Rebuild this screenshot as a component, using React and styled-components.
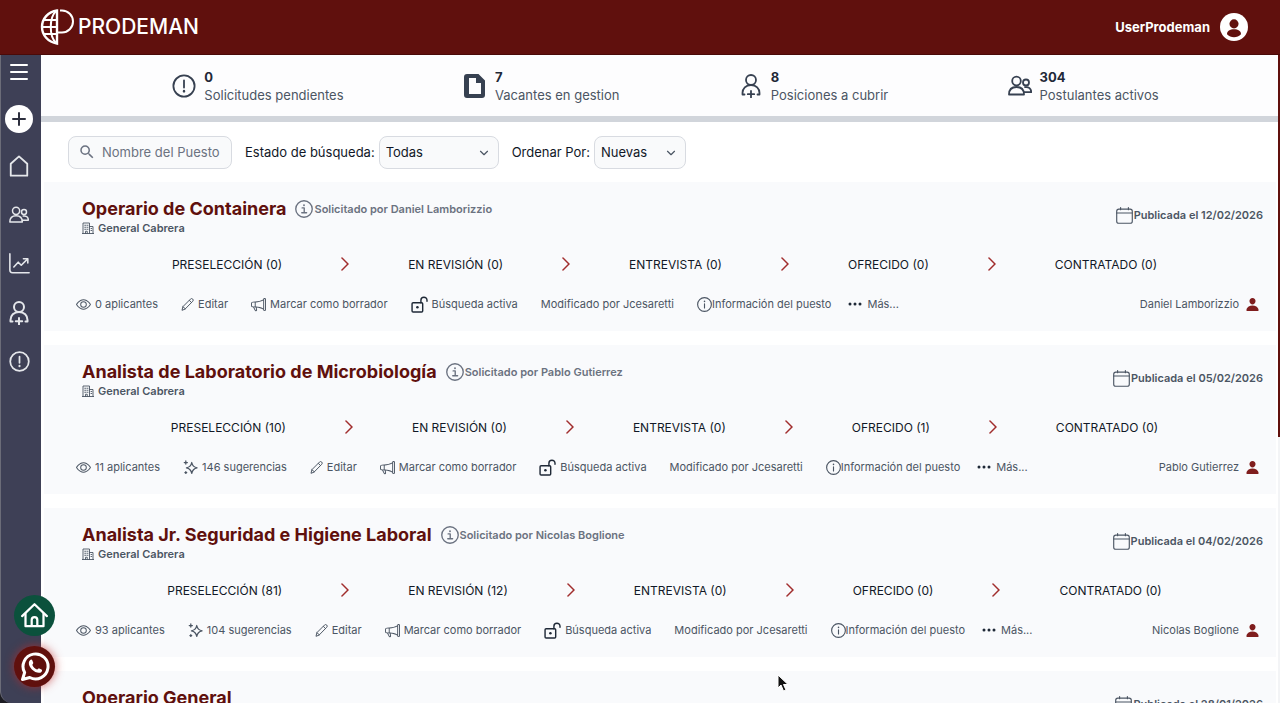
import React, { useState } from "react";
import styled, { createGlobalStyle } from "styled-components";
import { BsChevronRight, BsThreeDots, BsEye, BsMegaphone } from "react-icons/bs";
import { IoPerson } from "react-icons/io5";
import { FiChevronDown } from "react-icons/fi";
import { MdSearch } from "react-icons/md";

const STATS = [
  { icon: "alert", total: 0, label: "Solicitudes pendientes" },
  { icon: "file", total: 7, label: "Vacantes en gestion" },
  { icon: "personAdd", total: 8, label: "Posiciones a cubrir" },
  { icon: "users", total: 304, label: "Postulantes activos" },
];

const STAGES = ["PRESELECCIÓN", "EN REVISIÓN", "ENTREVISTA", "OFRECIDO", "CONTRATADO"];

const JOBS = [
  {
    id: 1,
    title: "Operario de Containera",
    owner: "Daniel Lamborizzio",
    date: "12/02/2026",
    totals: [0, 0, 0, 0, 0],
    applicants: 0,
  },
  {
    id: 2,
    title: "Analista de Laboratorio de Microbiología",
    owner: "Pablo Gutierrez",
    date: "05/02/2026",
    totals: [10, 0, 0, 1, 0],
    applicants: 11,
    suggestions: 146,
  },
  {
    id: 3,
    title: "Analista Jr. Seguridad e Higiene Laboral",
    owner: "Nicolas Boglione",
    date: "04/02/2026",
    totals: [81, 12, 0, 0, 0],
    applicants: 93,
    suggestions: 104,
  },
  {
    id: 4,
    title: "Operario General",
    date: "28/01/2026",
    totals: [0, 0, 0, 0, 0],
    applicants: 0,
  },
];

const ICONS = {
  alert: (
    <>
      <circle cx="12" cy="12" r="10.6" />
      <path d="M12 6.5v7" />
      <path d="M12 17v.4" strokeWidth="2.4" />
    </>
  ),
  file: (
    <path
      d="M4 0h11.500L22 6.500V21a3 3 0 0 1-3 3H4a3 3 0 0 1-3-3V3a3 3 0 0 1 3-3ZM6 4V20h12V9H13V4Z"
      fill="currentColor"
      fillRule="evenodd"
      stroke="none"
    />
  ),
  personAdd: (
    <>
      <circle cx="12" cy="6" r="5" />
      <path d="M5.500 20.500H3.500v-1.500c0-4.500 3.300-8 8.500-8s8.500 3.500 8.500 8v1.500H18.500" />
      <path d="M12 17v6.500M8.800 20.200h6.400" />
    </>
  ),
  users: (
    <>
      <circle cx="8.500" cy="7" r="4.300" />
      <path d="M1 20.500c0-4.800 3-7.500 7.500-7.500s7.500 2.700 7.500 7.500Z" />
      <circle cx="18" cy="8.500" r="3" />
      <path d="M17 13.200c3.800-.6 6.200 1.400 6.200 5H16" />
    </>
  ),
  home: <path d="M3 22.500V9.500L12 1.500l9 8v13Z" />,
  chart: (
    <>
      <path d="M1 1v18.500a3 3 0 0 0 3 3h19" />
      <path d="M5.500 16l5-5.500 3.500 3.500 7-7" />
      <path d="M16.500 6.500h5v5" />
    </>
  ),
  house: (
    <>
      <path d="M1 12.500 12 2l11 10.500" />
      <path d="M4 10.500V21.500h16V10.500" />
      <path d="M9.500 21v-5a2.500 2.500 0 0 1 5 0v5" />
    </>
  ),
  whatsapp: (
    <>
      <path d="M2 22l1.700-5.600A10 10 0 1 1 7.800 20.400Z" />
      <path
        d="M8 6.500c.8-.7 1.500-.5 1.900.3l.7 1.700c.2.500-.8 1.300-.7 1.800.7 1.600 2 2.900 3.700 3.600.5.200 1.200-1 1.800-.8l1.800.9c.7.400.5 1.200.1 1.700-2.600 3.200-11-2.300-10.200-7.500.1-.7.400-1.300.9-1.700Z"
        fill="currentColor"
        stroke="none"
      />
    </>
  ),
  building: (
    <>
      <path d="M2 23V2h13v21M15 9h7v14M0 23h24" />
      <path d="M5.500 6.500h2M10 6.500h2M5.500 10.500h2M10 10.500h2M5.500 14.500h2M10 14.500h2M18 13h1.500M18 17h1.500M7 23v-4.500h3.500V23" />
    </>
  ),
  infoSerif: (
    <>
      <circle cx="12" cy="12" r="11" />
      <path d="M9.500 10.500H12.300V17M9 17h6.500" />
      <path d="M12 6.800v.3" strokeWidth="2.400" />
    </>
  ),
  info: (
    <>
      <circle cx="12" cy="12" r="11" />
      <path d="M12 11v6.500" />
      <path d="M12 6.800v.3" strokeWidth="2.400" />
    </>
  ),
  calendar: (
    <>
      <rect x="1" y="3" width="22" height="20" rx="3" />
      <path d="M1 8.500h22M6.500 .8v3M17.500 .8v3" />
    </>
  ),
  pencil: <path d="M2 22l1.500-6L17.500 2a2.600 2.600 0 0 1 4.200 4L8 20Zm1.500-6L8 20M15.500 4.500l4 4" />,
  sparkles: (
    <>
      <path d="M14 4c1 5.500 3 7.500 8.500 8.500C17 13.500 15 15.500 14 21.500c-1-6-3-8-8.500-9C11 11.500 13 9.500 14 4Z" />
      <path d="M4.500 1.500v5M2 4h5" />
      <path d="M4.500 18.500v3M3 20h3" />
    </>
  ),
  unlock: (
    <>
      <rect x="1.500" y="9.500" width="15" height="13" rx="1.500" />
      <path d="M14 9.500V6a4.300 4.300 0 0 1 8.600 0v1.500" />
      <path d="M9 16h.1" strokeWidth="3.500" />
    </>
  ),
  avatar: (
    <>
      <circle cx="12" cy="12" r="12" fill="#fff" stroke="none" />
      <circle cx="12" cy="9.300" r="3.900" fill="#60100d" stroke="none" />
      <path d="M6 18.300c0-3 2.500-4.300 6-4.300s6 1.300 6 4.300c-3 3.300-9 3.300-12 0Z" fill="#60100d" stroke="none" />
    </>
  ),
};

function Icon({ name, size = 24, weight = 1.8 }) {
  return (
    <Drawing
      width={size}
      height={size}
      viewBox="0 0 24 24"
      fill="none"
      stroke="currentColor"
      strokeWidth={weight}
      strokeLinecap="round"
      strokeLinejoin="round"
      aria-hidden="true"
    >
      {ICONS[name]}
    </Drawing>
  );
}

function Header() {
  return (
    <TopBar>
      <Brand href="#inicio">
        <svg width="34" height="36" viewBox="0 0 34 36" fill="none" stroke="#fff" strokeWidth="2.4">
          <path d="M17 1.500v33C8 33 2 26 2 18S8 2.500 17 1.500Z" />
          <path d="M16 2C9 9 9 27 16 34M2 18H17M4 11h13M4 25h13" strokeWidth="2" />
          <path d="M20 1.500h2a11 11 0 0 1 0 22h-5" strokeWidth="2" />
        </svg>
        PRODEMAN
      </Brand>
      <UserButton type="button">
        UserProdeman
        <Icon name="avatar" size={28} />
      </UserButton>
    </TopBar>
  );
}

function SideMenu() {
  return (
    <Side>
      <MenuButton type="button" aria-label="Menú">
        <svg width="18" height="16" viewBox="0 0 18 16" stroke="#fff" strokeWidth="2" strokeLinecap="round">
          <path d="M1 1h16M1 8h16M1 15h16" />
        </svg>
      </MenuButton>
      <AddButton type="button" aria-label="Nueva búsqueda">
        <svg width="14" height="14" viewBox="0 0 14 14" stroke="#2d2f3e" strokeWidth="2" strokeLinecap="round">
          <path d="M7 1v12M1 7h12" />
        </svg>
      </AddButton>
      <SideLink href="#inicio" aria-label="Inicio">
        <Icon name="home" size={22} weight={2} />
      </SideLink>
      <SideLink href="#postulantes" aria-label="Postulantes">
        <Icon name="users" size={20} />
      </SideLink>
      <SideLink href="#reportes" aria-label="Reportes">
        <Icon name="chart" size={21} />
      </SideLink>
      <SideLink href="#posiciones" aria-label="Posiciones">
        <Icon name="personAdd" size={24} weight={2} />
      </SideLink>
      <SideLink href="#solicitudes" aria-label="Solicitudes">
        <Icon name="alert" size={21} weight={2} />
      </SideLink>
    </Side>
  );
}

function JobCard({ job }) {
  return (
    <Card>
      <CardTop>
        <div>
          <TitleRow>
            <Title>{job.title}</Title>
            {job.owner && (
              <Requested>
                <Icon name="infoSerif" size={18} />
                Solicitado por {job.owner}
              </Requested>
            )}
          </TitleRow>
          <Place>
            <Icon name="building" size={12} />
            General Cabrera
          </Place>
        </div>
        <Published>
          <Icon name="calendar" size={17} weight={1.6} />
          Publicada el {job.date}
        </Published>
      </CardTop>
      <Stages>
        {STAGES.map((stage, i) => (
          <React.Fragment key={stage}>
            {i > 0 && <BsChevronRight size={16} color="#991b1b" strokeWidth="0.5" />}
            <Stage type="button">
              {stage} ({job.totals[i]})
            </Stage>
          </React.Fragment>
        ))}
      </Stages>
      <Actions>
        <Action type="button">
          <BsEye size={15} />
          {job.applicants} aplicantes
        </Action>
        {job.suggestions && (
          <Action type="button">
            <Icon name="sparkles" size={15} weight={2} />
            {job.suggestions} sugerencias
          </Action>
        )}
        <Action type="button">
          <Icon name="pencil" size={13} />
          Editar
        </Action>
        <Action type="button">
          <BsMegaphone size={15} />
          Marcar como borrador
        </Action>
        <Action type="button">
          <Dark>
            <Icon name="unlock" size={17} weight={2} />
          </Dark>
          Búsqueda activa
        </Action>
        <span>Modificado por Jcesaretti</span>
        <Action type="button" $tight>
          <Icon name="info" size={15} />
          Información del puesto
        </Action>
        <More type="button">
          <Dark>
            <BsThreeDots size={16} />
          </Dark>
          Más...
        </More>
        <Owner>
          {job.owner}
          <IoPerson size={15} color="#7f1d1d" />
        </Owner>
      </Actions>
    </Card>
  );
}

export default function App() {
  const [search, setSearch] = useState("");
  const [status, setStatus] = useState("Todas");
  const [order, setOrder] = useState("Nuevas");

  return (
    <Page>
      <GlobalStyle />
      <Header />
      <Body>
        <SideMenu />
        <Main>
          <StatsBar>
            {STATS.map((stat) => (
              <Stat key={stat.label}>
                <Icon name={stat.icon} size={24} />
                <div>
                  <strong>{stat.total}</strong>
                  <p>{stat.label}</p>
                </div>
              </Stat>
            ))}
          </StatsBar>
          <Filters>
            <SearchBox>
              <MdSearch size={18} />
              <input
                type="text"
                aria-label="Nombre del Puesto"
                placeholder="Nombre del Puesto"
                value={search}
                onChange={(e) => setSearch(e.target.value)}
              />
            </SearchBox>
            <label htmlFor="status">Estado de búsqueda:</label>
            <SelectBox $width={120}>
              <select id="status" value={status} onChange={(e) => setStatus(e.target.value)}>
                <option>Todas</option>
                <option>Activas</option>
              </select>
              <FiChevronDown size={14} />
            </SelectBox>
            <label htmlFor="order">Ordenar Por:</label>
            <SelectBox $width={92}>
              <select id="order" value={order} onChange={(e) => setOrder(e.target.value)}>
                <option>Nuevas</option>
                <option>Antiguas</option>
              </select>
              <FiChevronDown size={14} />
            </SelectBox>
          </Filters>
          <List>
            {JOBS.map((job) => (
              <JobCard key={job.id} job={job} />
            ))}
          </List>
        </Main>
        <ScrollTrack>
          <ScrollThumb />
        </ScrollTrack>
      </Body>
      <Floating>
        <RoundLink href="#inicio" aria-label="Ir al inicio">
          <Icon name="house" size={27} weight={2} />
        </RoundLink>
        <RoundLink href="#whatsapp" aria-label="WhatsApp" $red>
          <Icon name="whatsapp" size={30} weight={2.4} />
        </RoundLink>
      </Floating>
      <Pointer width="12" height="18" viewBox="0 0 12 18">
        <path d="M1 1v13l3-3 2.500 6 2.500-1-2.500-5.500H11Z" fill="#111" stroke="#fff" />
      </Pointer>
    </Page>
  );
}

const GlobalStyle = createGlobalStyle`
  * {
    box-sizing: border-box;
  }

  body {
    margin: 0;
    overflow: hidden;
    background: #ffffff;
    font-family: "Inter", sans-serif;
    color: #111827;
  }

  button,
  input,
  select {
    font: inherit;
    color: inherit;
  }

  button {
    padding: 0;
    border: none;
    background: none;
    cursor: pointer;
  }

  p {
    margin: 0;
  }
`;

const Drawing = styled.svg`
  flex-shrink: 0;
`;

const Page = styled.div`
  display: flex;
  flex-direction: column;
  height: 100vh;
  overflow: hidden;
`;

const TopBar = styled.header`
  display: flex;
  align-items: center;
  justify-content: space-between;
  flex-shrink: 0;
  height: 55px;
  padding: 0 32px 0 40px;
  background: #60100d;
  border-bottom: 1px solid #4a0a08;
  color: #ffffff;
`;

const Brand = styled.a`
  display: flex;
  align-items: center;
  gap: 4px;
  font-size: 21px;
  line-height: 24px;
  font-weight: 500;
  color: #ffffff;
  text-decoration: none;
`;

const UserButton = styled.button`
  display: flex;
  align-items: center;
  gap: 10px;
  font-size: 13px;
  font-weight: 700;
`;

const Body = styled.div`
  display: flex;
  flex: 1;
  min-height: 0;
  background: linear-gradient(to right, #1c1c22 20px, #ffffff 20px);
`;

const Side = styled.nav`
  display: flex;
  flex-direction: column;
  align-items: center;
  flex-shrink: 0;
  width: 41px;
  padding: 9px 4px 0 0;
  background: #3e4056;
  border-left: 1px solid #6b6c78;
  border-bottom-left-radius: 12px;
  color: #e5e7eb;
`;

const MenuButton = styled.button`
  display: flex;
  height: 16px;
`;

const AddButton = styled.button`
  display: flex;
  align-items: center;
  justify-content: center;
  width: 28px;
  height: 28px;
  margin: 25px 0 8px;
  border-radius: 50%;
  background: #ffffff;
`;

const SideLink = styled.a`
  display: flex;
  align-items: center;
  height: 49px;
  color: inherit;
`;

const Main = styled.main`
  display: flex;
  flex-direction: column;
  flex: 1;
  min-width: 0;
  overflow: hidden;
  background: #ffffff;
`;

const StatsBar = styled.section`
  display: flex;
  align-items: center;
  justify-content: space-evenly;
  flex-shrink: 0;
  height: 67px;
  padding-left: 12px;
  background: #fdfdfe;
  border-bottom: 6px solid #d1d5db;
  color: #374151;
`;

const Stat = styled.div`
  display: flex;
  align-items: center;
  gap: 8px;
  font-size: 13px;
  line-height: 18px;

  strong {
    display: block;
    font-weight: 700;
    color: #1f2937;
  }

  p {
    color: #4b5563;
  }
`;

const Filters = styled.form`
  display: flex;
  align-items: center;
  flex-shrink: 0;
  height: 60px;
  padding-left: 27px;
  font-size: 13px;

  label {
    margin: 0 4px 0 13px;
  }
`;

const SearchBox = styled.div`
  display: flex;
  align-items: center;
  gap: 6px;
  width: 164px;
  height: 33px;
  padding: 0 9px;
  border: 1px solid #d8dbe1;
  border-radius: 8px;
  background: #f9fafb;
  color: #6b7280;

  svg {
    flex-shrink: 0;
  }

  input {
    width: 100%;
    padding: 0;
    border: none;
    outline: none;
    background: none;
  }

  input::placeholder {
    color: #6b7280;
  }
`;

const SelectBox = styled.div`
  position: relative;
  width: ${(props) => props.$width}px;

  select {
    width: 100%;
    height: 33px;
    padding: 0 6px;
    appearance: none;
    border: 1px solid #d8dbe1;
    border-radius: 8px;
    background: #f9fafb;
  }

  svg {
    position: absolute;
    top: 10px;
    right: 8px;
    color: #4b5563;
    pointer-events: none;
  }
`;

const List = styled.section`
  display: flex;
  flex-direction: column;
  gap: 14px;
  padding: 0 2px 0 3px;
`;

const Card = styled.article`
  flex-shrink: 0;
  padding: 14px 13px 15px 32px;
  background: #f9fafc;
`;

const CardTop = styled.div`
  display: flex;
  justify-content: space-between;
  align-items: center;
  padding-left: 6px;
`;

const TitleRow = styled.div`
  display: flex;
  align-items: center;
  gap: 9px;
`;

const Title = styled.h2`
  margin: 0;
  font-size: 18px;
  line-height: 26px;
  font-weight: 700;
  color: #60100d;
`;

const Requested = styled.span`
  display: flex;
  align-items: center;
  gap: 1px;
  font-size: 11px;
  font-weight: 600;
  color: #6b7280;
`;

const Place = styled.p`
  display: flex;
  align-items: center;
  gap: 4px;
  font-size: 11px;
  line-height: 12px;
  font-weight: 600;
  color: #4b5563;
`;

const Published = styled.span`
  display: flex;
  align-items: center;
  gap: 1px;
  font-size: 11px;
  font-weight: 600;
  color: #4b5563;
`;

const Stages = styled.div`
  display: flex;
  align-items: center;
  justify-content: center;
  gap: 55px;
  height: 24px;
  margin-top: 18px;
  padding-right: 10px;
`;

const Stage = styled.button`
  font-size: 12px;
  white-space: nowrap;
`;

const Actions = styled.div`
  display: flex;
  align-items: center;
  gap: 23px;
  height: 24px;
  margin-top: 16px;
  font-size: 11px;
  white-space: nowrap;
  color: #4b5563;
`;

const Action = styled.button`
  display: flex;
  align-items: center;
  gap: ${(props) => (props.$tight ? "0" : "4px")};
`;

const More = styled(Action)`
  margin-left: -7px;
`;

const Dark = styled.span`
  display: flex;
  color: #1f2937;
`;

const Owner = styled.span`
  display: flex;
  align-items: center;
  gap: 6px;
  margin-left: auto;
  padding-right: 3px;
`;

const ScrollTrack = styled.div`
  width: 2px;
  background: #f3f4f6;
`;

const ScrollThumb = styled.div`
  height: 59%;
  background: #60100d;
`;

const Floating = styled.div`
  position: fixed;
  left: 14px;
  bottom: 16px;
  display: flex;
  flex-direction: column;
  gap: 10px;
`;

const RoundLink = styled.a`
  display: flex;
  align-items: center;
  justify-content: center;
  width: 41px;
  height: 41px;
  border-radius: 50%;
  background: ${(props) => (props.$red ? "#60100d" : "#0b513c")};
  box-shadow: ${(props) => (props.$red ? "0 0 10px rgba(190, 40, 40, 0.7)" : "none")};
  color: #ffffff;
`;

const Pointer = styled.svg`
  position: fixed;
  left: 777px;
  top: 674px;
`;
